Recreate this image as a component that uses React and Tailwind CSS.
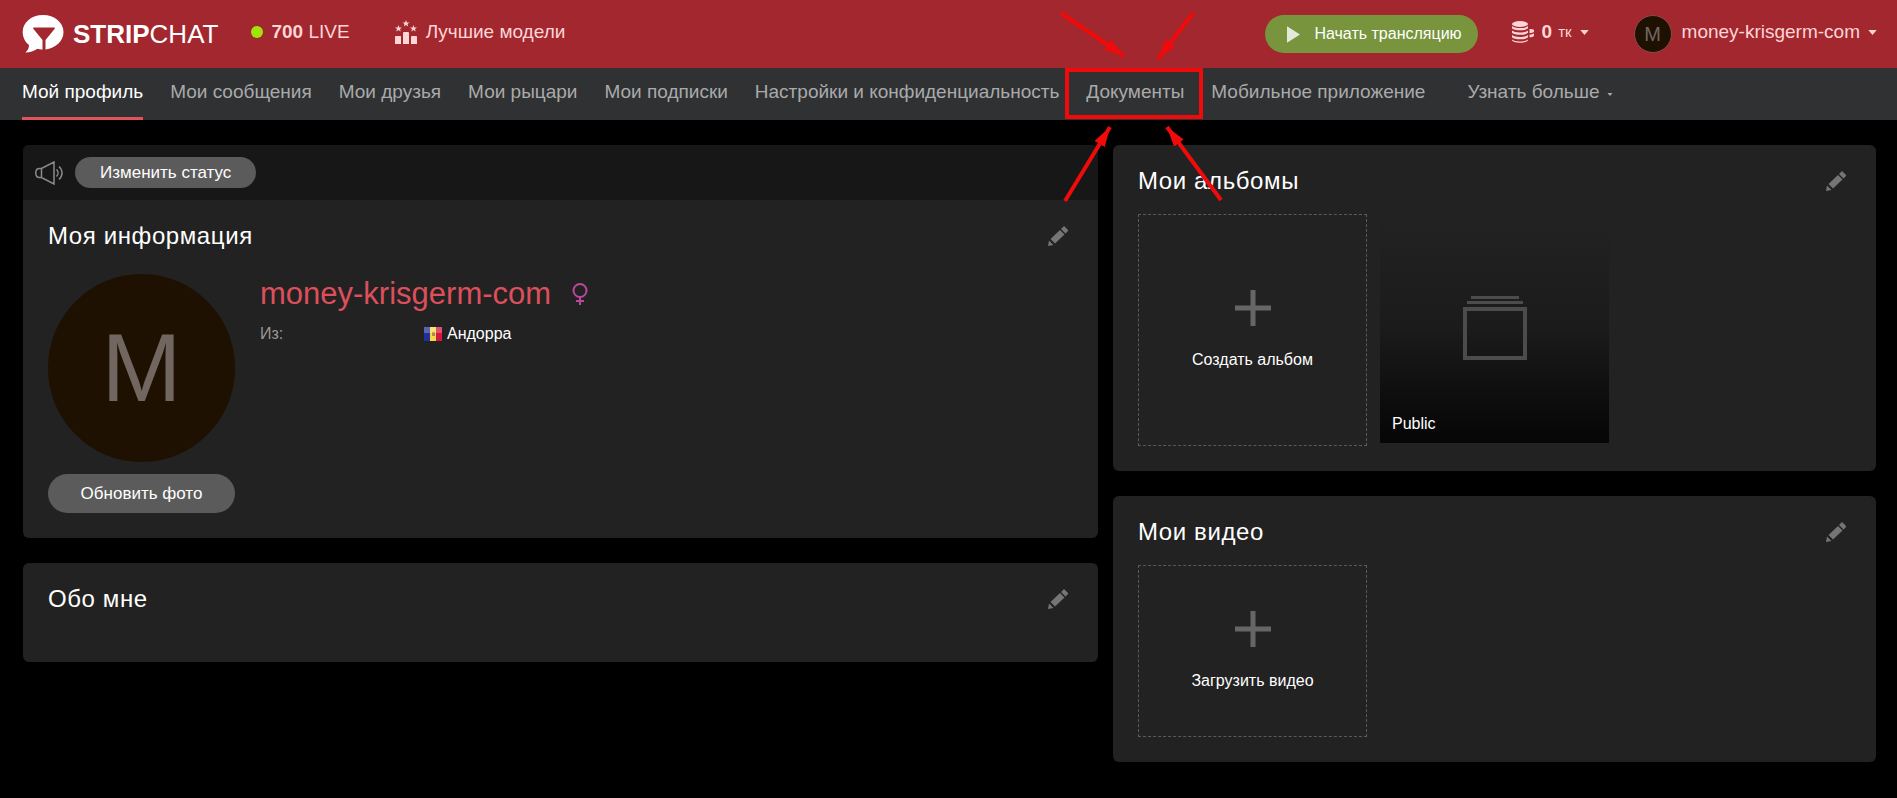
import React from 'react'

const navItems = [
  'Мои сообщения',
  'Мои друзья',
  'Мои рыцари',
  'Мои подписки',
  'Настройки и конфиденциальность',
  'Документы',
  'Мобильное приложение',
]

const arrows = [
  [1061, 13, 1124, 56],
  [1193, 13, 1158, 59],
  [1065, 201, 1110, 127],
  [1221, 200, 1167, 127],
]

function Caret({ className }) {
  return (
    <svg viewBox="0 0 10 6" className={className} fill="currentColor" aria-hidden="true">
      <path d="M0 0h10L5 6z" />
    </svg>
  )
}

function EditButton({ label }) {
  return (
    <button aria-label={label} className="text-[#757575]">
      <svg viewBox="0 0 20 20" className="w-5 h-5" fill="currentColor">
        <path d="M0 20l1-5.500 4.500 4.500zM2.500 13l9.500-9 4.500 4.500-9.500 9zM13 3L16 0l4.500 4.500-3 3z" />
      </svg>
    </button>
  )
}

function Panel({ title, className, children }) {
  return (
    <section className={className}>
      <div className="flex items-center justify-between pl-[25px] pr-[30px]">
        <h2 className="text-2xl leading-8 tracking-wide text-white">{title}</h2>
        <EditButton label={title} />
      </div>
      {children}
    </section>
  )
}

function AddTile({ label, className }) {
  return (
    <button className={className}>
      <svg viewBox="0 0 36 36" className="w-9 h-9" fill="#666">
        <path d="M15.500 0h5v15.500H36v5H20.500V36h-5V20.500H0v-5h15.500z" />
      </svg>
      <span className="mt-6 text-base leading-5 text-white">{label}</span>
    </button>
  )
}

function Header() {
  return (
    <header className="flex items-center h-17 pl-[22px] pr-5 bg-[#a2272f] text-[#ffd5d5] text-[19px]">
      <a href="#" className="flex items-center text-white">
        <svg viewBox="0 0 42 38" className="w-[42px] h-[38px] mr-[9px]">
          <path fill="#fff" d="M21 0C32.500 0 41.500 7.500 41.500 17S33.500 33 23.500 34.500V25l9-11c.6-.8.3-1.500-.5-1.500H12c-.8 0-1.100.7-.5 1.500l9 11v9.500c-2 .1-3.500-.3-5-.8C12 36 8 37.300 3.500 37.500 6 35 7 33 7 30 3 27 .7 22 .7 17 .7 7.500 9.500 0 21 0z" />
        </svg>
        <span className="text-[26px] leading-8"><b>STRIP</b>CHAT</span>
      </a>
      <a href="#" className="flex items-center pb-1 ml-[33px]">
        <span className="w-3 h-3 mr-2 rounded-full bg-[#a2e30a]" />
        <span><b>700</b> LIVE</span>
      </a>
      <a href="#" className="flex items-center pb-1 ml-[45px]">
        <svg viewBox="0 0 22 24" className="w-[22px] h-6 mr-[9px]" fill="currentColor">
          <path d="M1 16h4.500q.5 0 .5.500V24H0v-7q0-1 1-1zM9 12h4q1 0 1 1v11H8V13q0-1 1-1zM17 16h4q1 0 1 1v7h-6v-7q0-1 1-1z" />
          <path d="M11 0l.9 2.400h2.600L12.500 4l.7 2.500L11 5 8.800 6.500 9.500 4l-2-1.600h2.600zM3.500 5l.9 2.400H7L5 9l.7 2.500-2.200-1.500-2.200 1.500L2 9 0 7.400h2.600zM18.500 5l.9 2.400H22L20 9l.7 2.500-2.200-1.500-2.200 1.500L17 9l-2-1.600h2.600z" />
        </svg>
        Лучшие модели
      </a>

      <div className="flex items-center ml-auto">
        <button className="flex items-center h-[38px] pl-[22px] pr-4 rounded-full bg-[#78953d] text-base text-white">
          <svg viewBox="0 0 14 18" className="w-[13px] h-[17px] mr-[14px]" fill="#e4eadb">
            <path d="M0 0l14 9-14 9z" />
          </svg>
          Начать трансляцию
        </button>
        <button className="flex items-center pb-1 ml-[34px]">
          <svg viewBox="0 0 22 22" className="w-[22px] h-[22px] mr-2" fill="currentColor">
            <ellipse cx="8" cy="3" rx="8" ry="3" />
            <path d="M0 5c2.500 2.800 13.500 2.800 16 0v2.200c-2.500 2.800-13.500 2.800-16 0zM0 9.500c2.500 2.600 13.500 2.600 16 0v2.200c-2.500 2.800-13.500 2.800-16 0zM0 14c2.500 2.600 13.500 2.600 16 0v2.200c-2.500 2.800-13.500 2.800-16 0zM0 18.500c2.500 2.600 13.500 2.600 16 0v1c-2.500 3-13.500 3-16 0z" />
            <path d="M17.500 8c2 0 4 .4 4.500 1v1.500c-.5 1-2.500 1.500-4.500 1.500zM17.500 13.500c2 0 3.800-.5 4.500-1.300v2.500c-.5 1-2.500 1.600-4.500 1.600z" />
          </svg>
          <b>0</b>
          <span className="ml-[6px] text-[15px]">тк</span>
          <Caret className="w-[9px] h-[5px] ml-2" />
        </button>
        <button className="flex items-center ml-[45px]">
          <span className="flex items-center justify-center w-[38px] h-[38px] mr-[10px] rounded-full border border-[#8d4a43] bg-[#1f1102] text-xl text-[#726760]">M</span>
          <span className="flex items-center pb-1">
            money-krisgerm-com
            <Caret className="w-[9px] h-[5px] ml-2" />
          </span>
        </button>
      </div>
    </header>
  )
}

function SubNav() {
  return (
    <nav className="flex h-13 gap-[27px] px-[22px] bg-[#2f3133] text-[19px] leading-12 text-[#aaa] whitespace-nowrap">
      <a href="#" className="h-13 border-b-3 border-[#e0525e] text-white">Мой профиль</a>
      {navItems.map((item) => (
        <a key={item} href="#">{item}</a>
      ))}
      <button className="flex items-center h-12 ml-[15px]">
        Узнать больше
        <Caret className="w-[6px] h-[3px] mt-1 ml-2" />
      </button>
    </nav>
  )
}

function ProfileInfo() {
  return (
    <div className="flex mt-[22px] pl-[25px]">
      <div className="w-[187px]">
        <div className="flex items-center justify-center h-[188px] rounded-full bg-[#1f1102] text-[96px] text-[#726760]">M</div>
        <button className="w-full h-[39px] mt-3 rounded-full bg-[#5b5b5b] text-[17px] text-white">Обновить фото</button>
      </div>
      <div className="ml-[25px]">
        <div className="flex items-center">
          <h1 className="text-[31px] leading-10 text-[#dd4f5b]">money-krisgerm-com</h1>
          <svg viewBox="0 0 18 22" className="w-[18px] h-[22px] ml-5" fill="none" stroke="#b9479b" strokeWidth="2">
            <circle cx="9" cy="7.500" r="6.500" />
            <path d="M9 14v8M5 18h8" />
          </svg>
        </div>
        <dl className="flex mt-[10px] text-base leading-5">
          <dt className="w-[164px] text-[#999]">Из:</dt>
          <dd className="flex items-center text-white">
            <svg viewBox="0 0 18 14" className="w-[18px] h-[14px] mr-[5px]">
              <path fill="#21309a" d="M0 0h6v14H0z" />
              <path fill="#f6d74a" d="M6 0h6v14H6z" />
              <path fill="#d3173e" d="M12 0h6v14h-6z" />
              <path fill="#b08a4a" d="M8 5h3v4H8z" />
              <path fill="#fff" fillOpacity=".25" d="M0 0h18v6H0z" />
            </svg>
            Андорра
          </dd>
        </dl>
      </div>
    </div>
  )
}

export default function App() {
  return (
    <div className="relative min-h-screen overflow-hidden bg-black font-['Liberation_Sans',Arial,sans-serif]">
      <Header />
      <SubNav />

      <main className="flex items-start gap-[15px] pt-[25px] pl-[23px] pr-[21px]">
        <div className="grow-[1075] basis-0">
          <div className="overflow-hidden rounded-md bg-[#222]">
            <div className="flex items-center h-[55px] pl-3 bg-[#171717]">
              <svg viewBox="0 0 28 24" className="w-7 h-6 mr-3" fill="none" stroke="#8a8a8a" strokeWidth="1.500">
                <path d="M19 1v22L6.500 16.500H4.500C-.5 16.500-.5 7.500 4.500 7.500h2zM6.500 7.500v9M21.500 8.500c2 2 2 5 0 7M24 5.500c4 3.500 4 9.500 0 13" />
              </svg>
              <button className="h-[31px] px-[25px] rounded-full bg-[#5b5b5b] text-[17px] text-white">Изменить статус</button>
            </div>
            <Panel title="Моя информация" className="pt-5 pb-[25px]">
              <ProfileInfo />
            </Panel>
          </div>
          <Panel title="Обо мне" className="mt-[25px] pt-5 pb-[47px] rounded-md bg-[#222]" />
        </div>

        <div className="grow-[763] basis-0">
          <Panel title="Мои альбомы" className="pt-5 pb-[25px] rounded-md bg-[#222]">
            <div className="flex items-start gap-[13px] mt-[17px] px-[25px]">
              <AddTile label="Создать альбом" className="flex flex-col items-center justify-center w-[229px] h-[232px] border border-dashed border-[#5a5a5a]" />
              <a href="#" className="flex flex-col items-center w-[229px] h-[229px] pt-[82px] pb-[9px] bg-linear-to-b from-[#222] via-[#1b1b1b] to-[#060606] text-base leading-5 text-white">
                <svg viewBox="0 0 64 64" className="w-16 h-16" fill="none" stroke="#4c4c4c">
                  <path strokeWidth="3" d="M8 1.500h48M4 6.500h56" />
                  <path strokeWidth="4" d="M2 13h60v49H2z" />
                </svg>
                <span className="self-start mt-auto pl-3">Public</span>
              </a>
            </div>
          </Panel>
          <Panel title="Мои видео" className="mt-[25px] pt-5 pb-[25px] rounded-md bg-[#222]">
            <div className="mt-[17px] px-[25px]">
              <AddTile label="Загрузить видео" className="flex flex-col items-center justify-center w-[229px] h-[172px] border border-dashed border-[#5a5a5a]" />
            </div>
          </Panel>
        </div>
      </main>

      {/* pointer arrows and frame over the documents link */}
      <svg viewBox="0 0 1897 798" className="absolute top-0 left-0 w-[1897px] h-[798px] max-w-none pointer-events-none" fill="none" stroke="#f00a0a">
        <defs>
          <marker id="head" markerUnits="userSpaceOnUse" markerWidth="22" markerHeight="16" refX="20" refY="6" orient="auto">
            <path d="M0 0l20 6-20 6z" fill="#f00a0a" stroke="none" />
          </marker>
        </defs>
        <rect x="1067" y="70" width="134" height="47" strokeWidth="4" />
        {arrows.map(([x1, y1, x2, y2]) => (
          <line key={x1} x1={x1} y1={y1} x2={x2} y2={y2} strokeWidth="4" markerEnd="url(#head)" />
        ))}
      </svg>
    </div>
  )
}
